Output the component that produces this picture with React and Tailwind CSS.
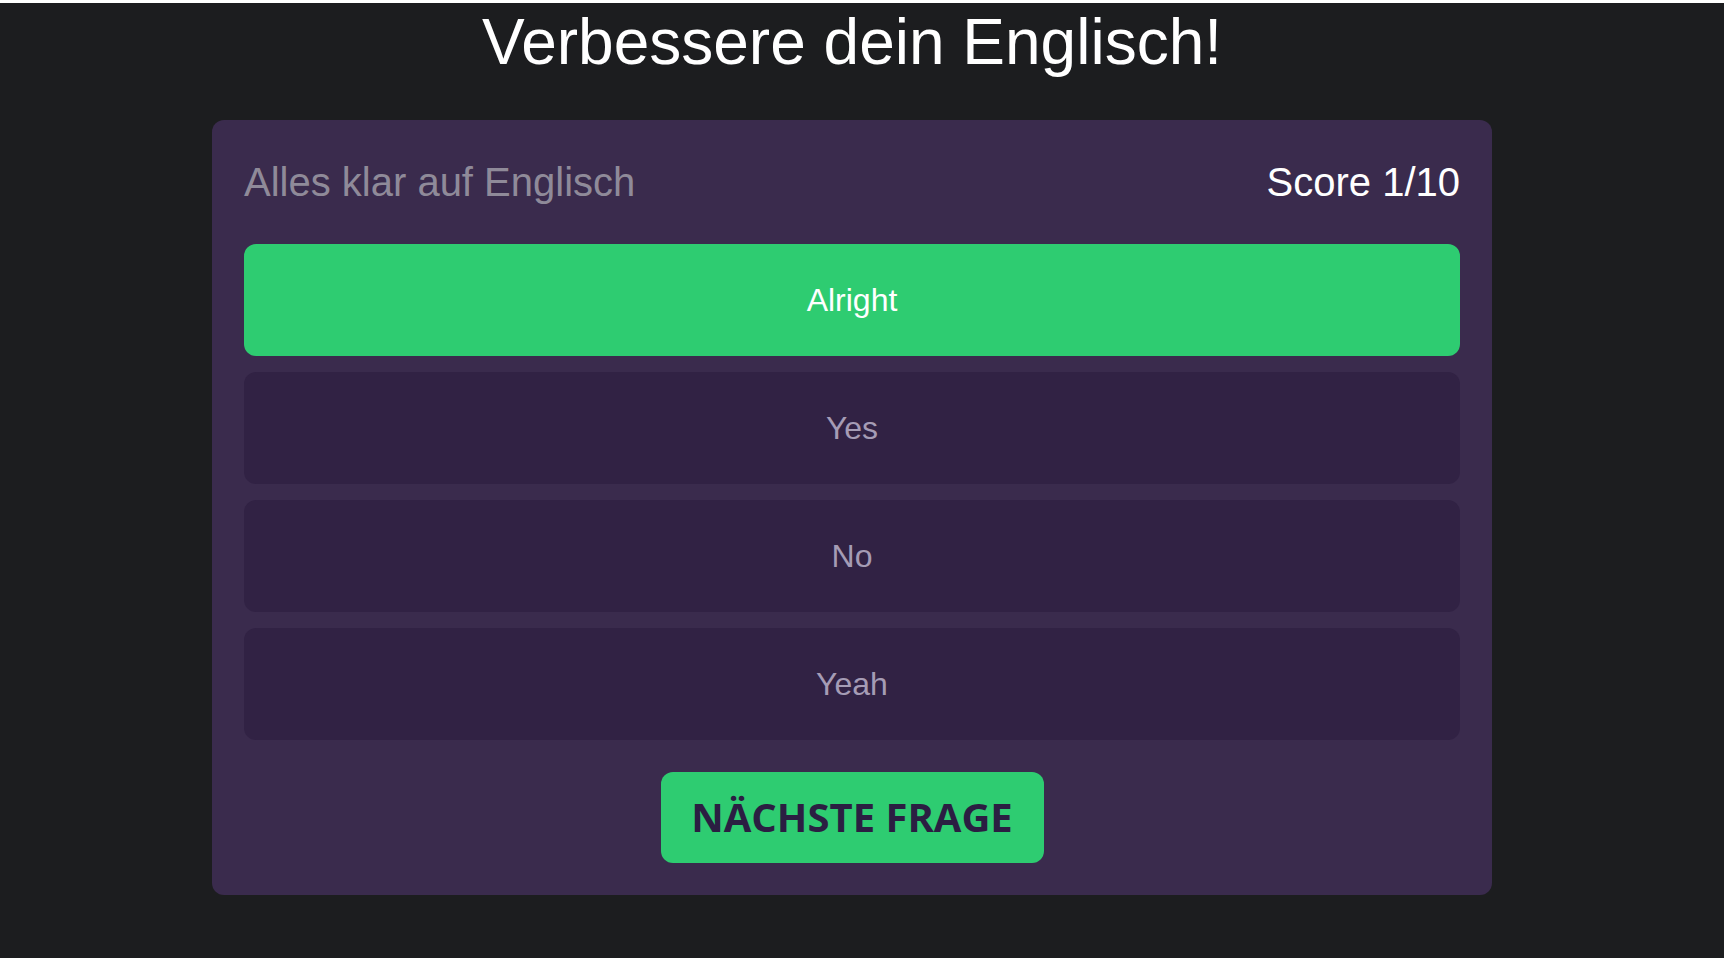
const answers = [
  { text: "Alright", correct: true },
  { text: "Yes" },
  { text: "No" },
  { text: "Yeah" },
];

export default function App() {
  return (
    <div className="min-h-screen bg-[#1c1d1f] border-t-[3px] border-white font-['Liberation_Sans',Arial,sans-serif]">
      <div className="flex flex-col items-center pr-[20px]">
        {/* TITLE */}
        <h1 className="pt-[3px] text-[64px] leading-[1.15] text-white text-center">
          Verbessere dein Englisch!
        </h1>

        {/* QUIZ CARD */}
        <div className="mt-[40px] w-[1280px] rounded-xl bg-[#3a2b4d] p-8">
          <div className="flex h-[60px] items-center justify-between mb-8">
            <span className="text-[40px] leading-[46px] text-[#8f8a99]">Alles klar auf Englisch</span>
            <span className="text-[40px] leading-[46px] text-white">Score 1/10</span>
          </div>

          <div className="flex flex-col gap-4">
            {answers.map((a) => (
              <button
                key={a.text}
                className={`h-[112px] w-full rounded-xl text-[32px] ${
                  a.correct ? "bg-[#2ecc71] text-white" : "bg-[#312244] text-[#a59cb5]"
                }`}
              >
                {a.text}
              </button>
            ))}
          </div>

          <div className="flex justify-center mt-8">
            <button className="h-[91px] w-[383px] rounded-xl bg-[#2ecc71] text-[#2b1e42] font-['Open_Sans',sans-serif] font-bold text-[40px] uppercase">
              Nächste Frage
            </button>
          </div>
        </div>
      </div>
    </div>
  );
}
